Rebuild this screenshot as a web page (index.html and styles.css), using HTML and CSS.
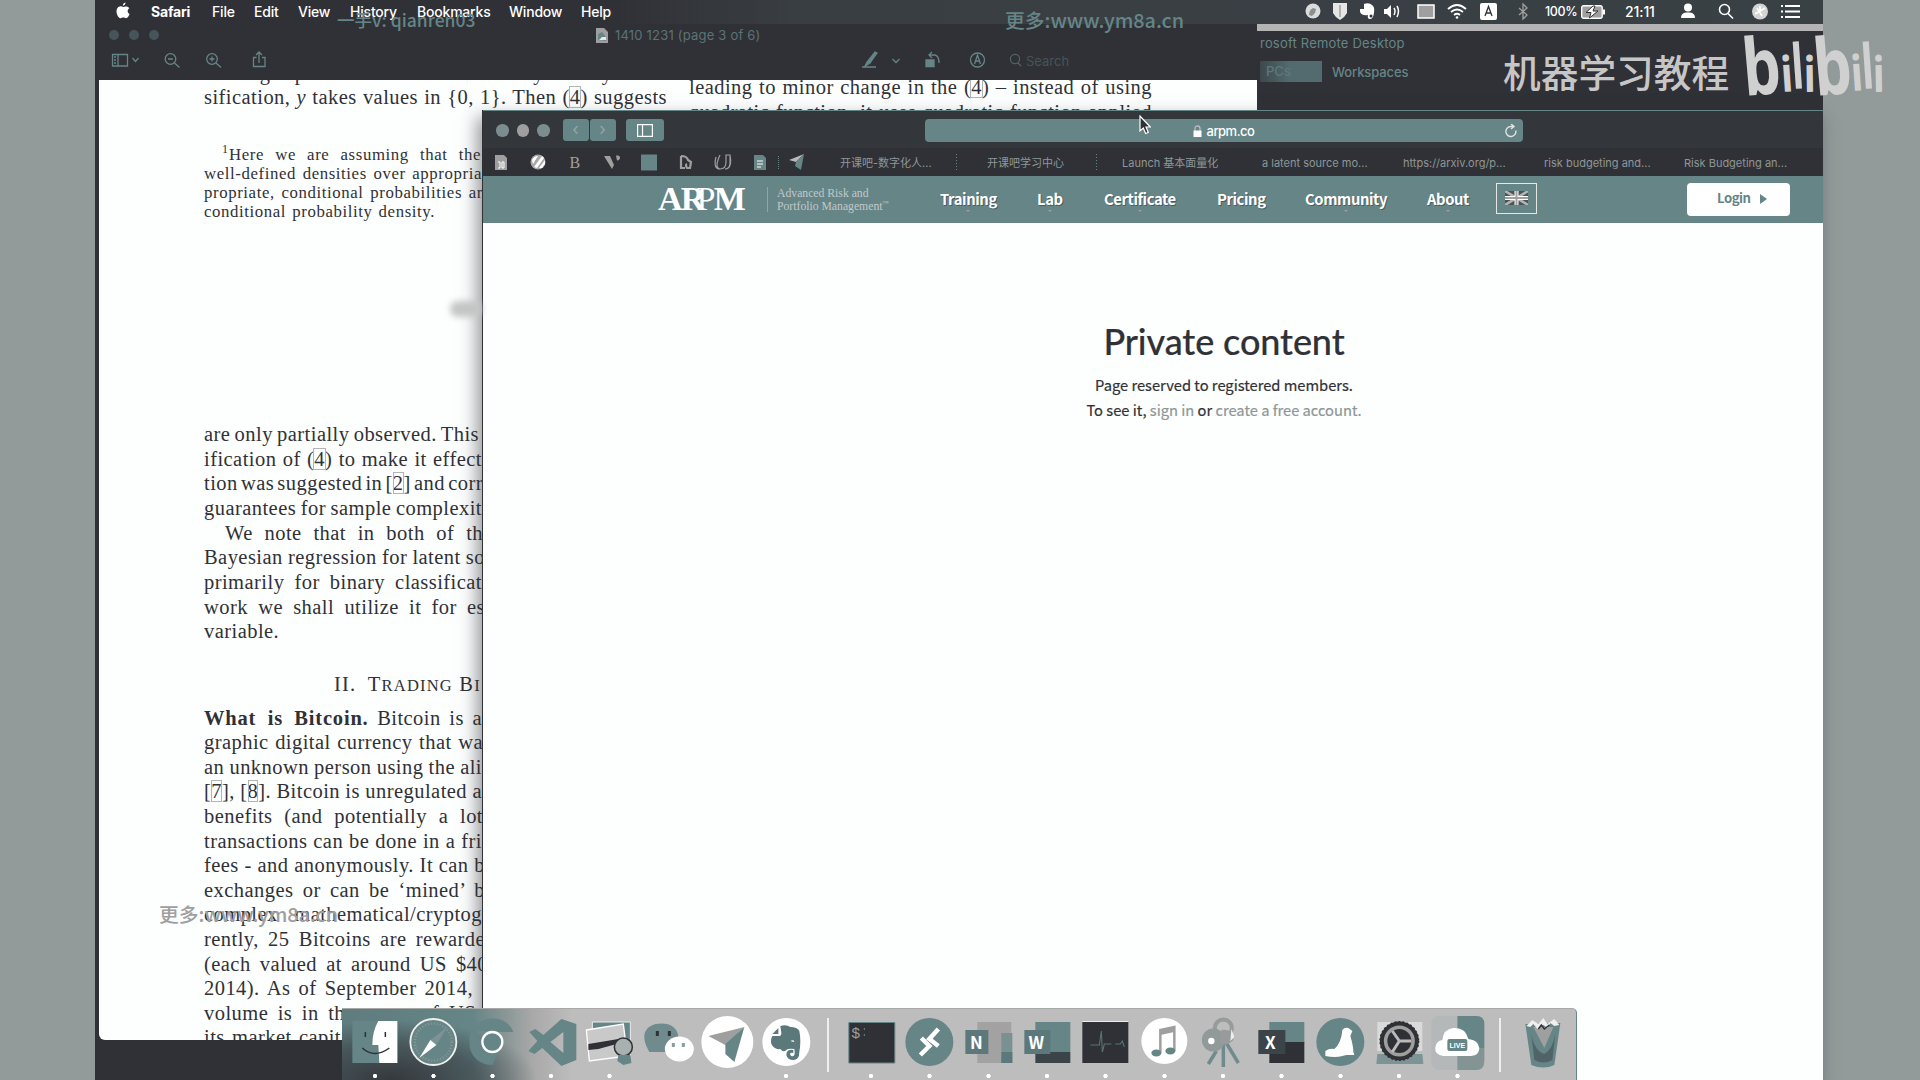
FILE: index.html
```html
<!DOCTYPE html>
<html lang="en">
<head>
<meta charset="utf-8">
<title>Private content</title>
<link rel="stylesheet" href="styles.css">
</head>
<body>
<div class="desktop">

  <section class="remote">
    <div class="remote-title">rosoft Remote Desktop</div>
    <div class="remote-tabs"><span class="tab-on">PCs</span><span class="tab">Workspaces</span></div>
  </section>

  <section class="preview">
    <header class="pv-title">
      <i class="pv-dot"></i><i class="pv-dot"></i><i class="pv-dot"></i>
      <svg class="pv-file" width="12" height="15" viewBox="0 0 12 15"><path d="M0 0h8l4 4v11H0z" fill="#9f9f9f"/><path d="M2 12V6l4-2 4 5v4z" fill="#658587"/><path d="M3 12h7V9H6z" fill="#e8e8e8"/></svg>
      <span class="pv-name">1410 1231 (page 3 of 6)</span>
    </header>
    <div class="pv-tools">
      <svg width="1157" height="36" viewBox="99 43 1157 36" fill="none" stroke="#658587" stroke-width="1.3">
        <path d="M112.500 54.500h15v11.500h-15zM118 54.500v11.500M114 57h2m-2 3h2m-2 3h2M132.500 58l3 3.500 3-3.500"/>
        <circle cx="170.500" cy="59" r="5.300"/><path d="M168 59h5M174.500 63l5 4.500"/>
        <circle cx="212" cy="59" r="5.300"/><path d="M209.500 59h5M212 56.500v5M216 63l5 4.500"/>
        <path d="M256.500 57.500h-3V66.500h11.500v-9h-3M259 63V52M256 55l3-3 3 3"/>
        <path d="M865 66l2-4 8-10 2 1-7 10zM862 67h14" fill="#658587"/><path d="M892.500 59l3.500 3.500 3.500-3.500"/>
        <path d="M926 60h8v6.500h-8z" fill="#658587"/><path d="M929 55h6q4 1 4 8M932 52l-3 3 3 3"/>
        <circle cx="977.500" cy="60" r="7"/><path d="M974.500 64l3-9 3 9M976 61h3"/>
        <circle cx="1015" cy="59" r="4.600" stroke="#506467"/><path d="M1018 63l3 3" stroke="#506467"/>
      </svg>
      <span class="pv-search">Search</span>
    </div>
    <div class="paper">
      <div class="col">
        <p class="w463">Making up models for the data by binary clas-</p>
        <p class="w463">sification, <em>y</em> takes values in {0, 1}. Then <span class="ref">(<b>4</b>)</span> suggests</p>
        <div class="foot">
          <p class="in w252"><sup>1</sup>Here we are assuming that the</p>
          <p class="w278">well-defined densities over appropria</p>
          <p class="w279">propriate, conditional probabilities ar</p>
          <p class="w231">conditional probability density.</p>
        </div>
        <div class="body">
          <p class="w275">are only partially observed. This</p>
          <p class="w278">ification of <span class="ref">(<b>4</b>)</span> to make it effect</p>
          <p class="w279">tion was suggested in [<b>2</b>] and corr</p>
          <p class="w278">guarantees for sample complexit</p>
          <p class="in w258">We note that in both of th</p>
          <p class="w281">Bayesian regression for latent so</p>
          <p class="w278">primarily for binary classificat</p>
          <p class="w281">work we shall utilize it for es</p>
          <p class="w72">variable.</p>
          <h2>II.&ensp;T<small>RADING</small> B<small>I</small></h2>
          <p class="w278"><strong>What is Bitcoin.</strong> Bitcoin is a</p>
          <p class="w279">graphic digital currency that wa</p>
          <p class="w278">an unknown person using the ali</p>
          <p class="w278">[<b>7</b>], [<b>8</b>]. Bitcoin is unregulated a</p>
          <p class="w279">benefits (and potentially a lot</p>
          <p class="w278">transactions can be done in a fri</p>
          <p class="w281">fees - and anonymously. It can b</p>
          <p class="w281">exchanges or can be ‘mined’ b</p>
          <p class="w278">complex mathematical/cryptog</p>
          <p class="w281">rently, 25 Bitcoins are rewarde</p>
          <p class="w284">(each valued at around US $40</p>
          <p class="w269">2014). As of September 2014,</p>
          <p class="w272">volume is in the range of US</p>
          <p class="w137">its market capit</p>
        </div>
      </div>
      <div class="col second">
        <p class="w463">leading to minor change in the <span class="ref">(<b>4</b>)</span> – instead of using</p>
        <p class="w463">quadratic function, it uses quadratic function applied</p>
      </div>
    </div>
  </section>

  <header class="menubar">
    <svg class="apple" width="14" height="17" viewBox="0 0 14 17"><path d="M9.500.5C7.800.800 6.800 2 6.900 3.700 8.600 3.600 9.700 2 9.500.5zM7.200 5C6 4.400 5 4.200 3.700 4.500 1.600 5 .4 6.900.5 9.400c.1 3 2 6.600 3.900 6.800 1 .1 1.700-.6 2.900-.6s1.800.6 2.800.6c1.500 0 2.900-2.500 3.500-4.100-2.500-1.200-2.500-4.600-.2-5.800C12.500 5 11 4.300 9.500 4.500 8.600 4.600 7.900 5 7.200 5z" fill="#fff"/></svg>
    <nav class="menus"><b>Safari</b><span>File</span><span>Edit</span><span>View</span><span>History</span><span>Bookmarks</span><span>Window</span><span>Help</span></nav>
    <div class="status">
      <svg width="232" height="27" viewBox="1300 0 232 27" fill="none" stroke="#fff" stroke-width="1.500">
        <circle cx="1313" cy="11" r="7.500" fill="#dcdcdc" stroke="none"/><path d="M1309 15q0-5 4-7l3 1-1 4-3 3z" fill="#8a8f90" stroke="none"/>
        <path d="M1333 3h14v10q-2 4-7 7-5-3-7-7z" fill="#e6e6e6" stroke="none"/><path d="M1340 5v12" stroke="#9f9f9f"/>
        <path d="M1364 4q5-2 8 1 3 2 2 8-1 6-4 6-3 0-2-4-6 1-8-3v-3h4z" fill="#fff" stroke="none"/><circle cx="1371" cy="16" r="1.500" fill="#303136" stroke="none"/>
        <path d="M1384 9h3l4-4v13l-4-4h-3z" fill="#fff" stroke="none"/><path d="M1394 8q2 3 0 7M1397 6q3 5 0 11"/>
        <path d="M1418 5h16v13h-16z" fill="#9f9f9f"/>
        <path d="M1448 9q9-8 18 0M1451 12q6-5 12 0M1454 15q3-2.500 6 0" stroke-width="1.800"/><circle cx="1457" cy="17.500" r="1.300" fill="#fff" stroke="none"/>
        <rect x="1480" y="3" width="17" height="17" rx="2" fill="#fff" stroke="none"/><path d="M1485 16l3.500-9.500 3.500 9.500M1486.300 13h4.500" stroke="#303136" stroke-width="1.300"/>
        <path d="M1519 8l8 7-4 4V4l4 4-8 7" stroke="#9f9f9f" stroke-width="1.300"/>
      </svg>
      <span class="pct">100%</span>
      <svg class="batt" width="25" height="14" viewBox="0 0 25 14"><rect x=".7" y=".7" width="20.500" height="12.600" rx="2" fill="#9f9f9f" stroke="#fff" stroke-width="1.400"/><path d="M23 4.500v5" stroke="#fff" stroke-width="2"/><path d="M12 1L5 7.500h5L8.500 13 17 6h-5l2-5z" fill="#fff" stroke="#303136"/></svg>
      <span class="clock">21:11</span>
      <svg class="right-ico" width="124" height="27" viewBox="1678 0 124 27" fill="none" stroke="#fff" stroke-width="1.600">
        <circle cx="1688" cy="7.500" r="4" fill="#fff" stroke="none"/><path d="M1681 18q0-5 5-5.500h4q5 .5 5 5.500z" fill="#fff" stroke="none"/>
        <circle cx="1724.500" cy="9.500" r="5"/><path d="M1728 13.500l5 5"/>
        <circle cx="1760" cy="11.500" r="8" fill="#d4d4d4" stroke="none"/><path d="M1755 14l10-6M1757 8l5 8M1760 6v5" stroke="#fff"/>
        <path d="M1785 6h15M1785 11.500h15M1785 17h15" stroke-width="2"/><path d="M1781 6h2M1781 11.500h2M1781 17h2" stroke-width="2"/>
      </svg>
    </div>
  </header>

  <section class="safari">
    <div class="sf-bar">
      <div class="sf-dots"><i></i><i></i><i></i></div>
      <div class="sf-nav"><span>‹</span><span>›</span></div>
      <div class="sf-side"><svg width="16" height="13" viewBox="0 0 16 13" fill="none" stroke="#fff" stroke-width="1.200"><path d="M.6.6h14.800v11.800H.6zM5.500.6v11.800"/></svg></div>
      <div class="sf-url">
        <svg width="9" height="12" viewBox="0 0 9 12"><path d="M2 6V3.500q0-2.500 2.500-2.500T7 3.500V6" fill="none" stroke="#bbb" stroke-width="1.300"/><path d="M.5 5.500h8V12h-8z" fill="#fff"/></svg>
        <span>arpm.co</span>
        <svg class="reload" width="12" height="14" viewBox="0 0 12 14" fill="none" stroke="#e4e4e4" stroke-width="1.400"><path d="M10.800 6.500A5 5 0 1 1 6 2.500h2M6 0l3 2.500L6 5"/></svg>
      </div>
    </div>
    <div class="sf-favs">
      <svg width="312" height="24" viewBox="492 150 312 24">
        <path d="M495 155h9l3 3v12h-12z" fill="#9f9f9f"/><path d="M498 162h2v6h-2m4-6h2v6h-2v-6" stroke="#fff" fill="none"/>
        <circle cx="538" cy="162" r="7.500" fill="#a8a8a8"/><path d="M532 160q2-4 6-4l-5 8zM534 167l8-11 2 2-7 10zM539 168l6-8v4l-3 4z" fill="#fff"/>
        <text x="569.500" y="168" class="fav-b">B</text>
        <path d="M604 156h6l4 9-2 4zM616 155.500q4-.5 4 2t-3 3z" fill="#9f9f9f"/>
        <path d="M641 154.500h16v16h-16z" fill="#658587"/>
        <path d="M681 156v12h4M681 156q6 0 7 4l3 2-1 6h-3q-2-3 0-4" fill="none" stroke="#9f9f9f" stroke-width="2.200"/>
        <path d="M720 155q-6 13 0 14 6 0 6-7v-7h4v8q0 6-5 6M716 157q-3 12 4 12M730 155q2 10-2 13" fill="none" stroke="#9f9f9f" stroke-width="1.200"/>
        <path d="M754 155h9l3 3v12h-12z" fill="#658587"/><path d="M757 161h6m-6 3h6m-6 3h4" stroke="#fff"/>
        <path d="M778.500 156v14" stroke="#658587" stroke-dasharray="1 1"/>
        <path d="M789 160l15-6-8 8z" fill="#b8b8b8"/><path d="M804 154l-3 16-6-4 1-4z" fill="#658587"/>
      </svg>
      <div class="links"><span>开课吧-数字化人...</span><span>开课吧学习中心</span><span>Launch 基本面量化</span><span>a latent source mo...</span><span>https://arxiv.org/p...</span><span>risk budgeting and...</span><span>Risk Budgeting an...</span></div>
    </div>
    <div class="site-head">
      <div class="logo"><span class="lt">AR<i>P</i>M</span><span class="tag">Advanced Risk and<br>Portfolio Management<sup>™</sup></span></div>
      <nav class="site-nav"><a>Training</a><a>Lab</a><a>Certificate</a><a class="plain">Pricing</a><a>Community</a><a>About</a></nav>
      <div class="flag"><svg width="23" height="14" viewBox="0 0 23 14"><path d="M0 0h23v14H0z" fill="#4b5558"/><path d="M0 0l23 14M23 0L0 14" stroke="#b5b5b5" stroke-width="2.500"/><path d="M11.500 0v14M0 7h23" stroke="#fff" stroke-width="4"/><path d="M11.500 0v14M0 7h23" stroke="#9f9f9f" stroke-width="2"/></svg></div>
      <a class="login">Login <i></i></a>
    </div>
    <main class="content">
      <h1>Private content</h1>
      <p>Page reserved to registered members.</p>
      <p>To see it, <a>sign in</a> or <a>create a free account.</a></p>
    </main>
  </section>

  <div class="smudge"></div>

  <footer class="dock">
    <svg class="app run" viewBox="-29 0 58 72"><path d="M-23 13H22v42h-45z" fill="#658587"/><path d="M3 13h19v42H4l-1-18h-6q0-14 6-24z" fill="#fff"/><path d="M-10 24v5M10 24v5M-13 40q12 11 27 0" fill="none" stroke="#303136" stroke-width="1.500"/></svg>
    <svg class="app run" viewBox="-29 0 58 72"><circle cy="34" r="23" fill="#658587" stroke="#f0f0f0" stroke-width="1.800"/><circle cy="34" r="18.500" fill="none" stroke="#8b9797" stroke-width="2.500" stroke-dasharray="1 2"/><path d="M14 19L3 37-3 32z" fill="#7f9293"/><path d="M-14 50L-3 32 3 37z" fill="#fff"/></svg>
    <svg class="app run" viewBox="-29 0 58 72"><path d="M-21 22Q-9 7 6 11q11 3 15 13H1z" fill="#658587"/><path d="M-21 22q-6 20 6 30 6 5 15 5l8-16-15-3z" fill="#658587"/><circle cy="34" r="10" fill="#658587" stroke="#fff" stroke-width="2.300"/></svg>
    <svg class="app run" viewBox="-29 0 58 72"><path d="M10 11l15 5v36l-15 6L-9 40l-8 6-6-3 9-10-8-9 6-3 8 6zM12 24L-1 34l13 11z" fill="#658587" fill-rule="evenodd"/></svg>
    <svg class="app run" viewBox="-29 0 58 72"><path d="M-17 14h38v34h-38z" fill="#658587" stroke="#eee"/><path d="M-23 22l37-6 4 32-38 5z" fill="#c9c9c9" stroke="#fff" stroke-width="1.300"/><path d="M-21 36l30-5 2 4-22 6-10 1z" fill="#303136"/><circle cx="14" cy="39" r="9" fill="#a9b0b0" stroke="#303136" stroke-width="1.500"/><path d="M9 47h12l1 8-8 2-6-4z" fill="#658587"/></svg>
    <svg class="app" viewBox="-29 0 58 72"><path d="M-19 44l-3-6q-7-17 9-22 20-3 23 12l-8 16z" fill="#6f8b8d"/><path d="M-11 23v5m12-5v5" stroke="#303136" stroke-width="3"/><ellipse cx="11" cy="41" rx="14.500" ry="12.500" fill="#fff"/><path d="M5 35v4m10-4v4" stroke="#8b9b9c" stroke-width="3"/></svg>
    <svg class="app" viewBox="-29 0 58 72"><circle cy="34" r="26" fill="#fff"/><path d="M-19 28l36-9L-2 37z" fill="#9f9f9f"/><path d="M17 19L7 54l-9-8V36z" fill="#658587"/></svg>
    <svg class="app run" viewBox="-29 0 58 72"><circle cy="34" r="24" fill="#fff"/><path d="M-6 18q6-2 10 1 7 0 9 4 2 10 0 21 0 8-6 8-6 0-7-5 0-6 7-5v3q-4-1-3 2 1 2 3 1 2-1 1-7-6-1-8 1-3 3-6-1-6 1-9-5-1-5 1-8h7q2 0 2-3z" fill="#5b797b"/><path d="M-8 20v6h-6z" fill="#5b797b"/><path d="M4 33q4-2 4 1z" fill="#fff"/></svg>
    <i class="sep"></i>
    <svg class="app run" viewBox="-29 0 58 72"><path d="M-22.500 14.500h46v40.500h-46z" fill="#303136" stroke="#658587"/><text x="-20" y="30" class="dollar">$</text><path d="M-7 20v2m0 4v2" stroke="#658587"/></svg>
    <svg class="app run" viewBox="-29 0 58 72"><circle cy="34" r="24" fill="#658587"/><path d="M-8 30l8 8-9 9M9 21L0 31l9 7" fill="none" stroke="#fff" stroke-width="4.500"/></svg>
    <svg class="app run" viewBox="-29 0 58 72"><path d="M-11 14h34v41h-34z" fill="#a2a2a2"/><path d="M13 25h11v30H13z" fill="#7b9091"/><path d="M13 44h11v11H13z" fill="#5b797b"/><path d="M-23 22H0v24h-23z" fill="#5d787b"/><text x="-12" y="41" class="ltr">N</text></svg>
    <svg class="app run" viewBox="-29 0 58 72"><path d="M-12 14h35v30h-35z" fill="#658587"/><path d="M-12 44h35v11h-35z" fill="#3b4549"/><path d="M-23 22H3v24h-26z" fill="#5d787b"/><text x="-11" y="41" class="ltr">W</text></svg>
    <svg class="app run" viewBox="-29 0 58 72"><path d="M-23 14h46v41h-46z" fill="#303136"/><path d="M-23 13.500h46" stroke="#eee"/><path d="M-15 37h9l2-14 1 21 2-8h7m4 0h5l2-3 2 6" fill="none" stroke="#587275" stroke-width="1.100"/></svg>
    <svg class="app run" viewBox="-29 0 58 72"><circle cy="33" r="23" fill="#fff"/><path d="M-4 45V22l14-3v24" fill="none" stroke="#9f9f9f" stroke-width="2.500"/><path d="M-4 22l14-3v5l-14 3z" fill="#9f9f9f"/><ellipse cx="-8" cy="45" rx="5" ry="3.500" fill="#658587"/><ellipse cx="6" cy="43" rx="5" ry="3.500" fill="#658587"/></svg>
    <svg class="app run" viewBox="-29 0 58 72"><path d="M-7 43l-8 13M0 27v32" stroke="#6f8b8d" stroke-width="3.500"/><path d="M3 35l12 20" stroke="#6f8b8d" stroke-width="3.500"/><circle cx="0" cy="20" r="8.500" fill="none" stroke="#979b9b" stroke-width="4"/><circle cx="-10" cy="32" r="11.500" fill="#929999"/><circle cx="-12" cy="33" r="3.200" fill="#fff"/><path d="M-2 22q12-2 12 10-8 8-14 2z" fill="#979b9b"/><path d="M8 21l3 8-4 4z" fill="#eee"/></svg>
    <svg class="app run" viewBox="-29 0 58 72"><path d="M-12 14h35v21h-35z" fill="#658587"/><path d="M-12 34h35v21h-35z" fill="#303136"/><path d="M-23 22H4v24h-27z" fill="#3b4549"/><text x="-11" y="41" class="ltr">X</text></svg>
    <svg class="app run" viewBox="-29 0 58 72"><circle cy="34" r="24" fill="#658587"/><path d="M2 22q2-3 6-2l4 3-2 5q3 10 3 16l1 3h-8l-4 1q-7 2-17 0l0-5q4-3 9-2 7-6 8-19z" fill="#fff"/></svg>
    <svg class="app run" viewBox="-29 0 58 72"><path d="M-22 14h45v29h-45z" fill="#dadada"/><path d="M-22 46h45l1 10h-47z" fill="#7c9496"/><circle cy="33" r="17.500" fill="#9f9f9f" stroke="#303136" stroke-width="4"/><circle cy="33" r="19" fill="none" stroke="#303136" stroke-width="2" stroke-dasharray="2 2"/><circle cy="33" r="12" fill="#303136"/><path d="M0 33h12M0 33l-7-10M0 33l-7 11" stroke="#bbb" stroke-width="3"/></svg>
    <svg class="app run" viewBox="-29 0 58 72"><rect x="-26" y="8" width="53" height="54" rx="8" fill="#b4b8b8"/><path d="M0 8h19q8 0 8 8v24H0z" fill="#658587"/><path d="M0 40h27v13q0 9-8 9H0z" fill="#839495"/><path d="M-14 48q-9-1-8-9 1-6 7-7 1-11 11-12 12-1 15 11 10 1 11 9 0 7-8 8z" fill="#fff"/><rect x="-10" y="31" width="20" height="12" rx="2" fill="#658587"/><text y="40" class="live">LIVE</text></svg>
    <i class="sep"></i>
    <svg class="app" viewBox="-29 0 58 72"><path d="M-18 16l35-1-6 42q-11 5-23 0z" fill="#658587"/><path d="M-10 19h20L1 40z" fill="#9f9f9f"/><path d="M-17 18l6-6 6 4 5-6 4 6 7-5 5 6-5 1-4-3-3 5-4-3-6 4-4-5-3 3z" fill="#efefef"/><path d="M-5 21l3-4 3 4 5-4" stroke="#303136" fill="none" stroke-width="1.500"/><path d="M-12 26q3 17 13 20Q9 42 12 26L9 52q-9 5-18 0z" fill="#506467"/></svg>
  </footer>

  <div class="mark m1">一手v: qianren03</div>
  <div class="mark m2">更多:www.ym8a.cn</div>
  <div class="mark m3">更多:www.ym8a.cn</div>
  <div class="mark m4">机器学习教程</div>
  <svg class="bili" width="146" height="76" viewBox="0 0 146 76">
    <text transform="translate(6 67) rotate(-5)" font-size="79" textLength="38" lengthAdjust="spacingAndGlyphs">b</text>
    <text transform="translate(43 63) rotate(-4)" font-size="49" textLength="12" lengthAdjust="spacingAndGlyphs">i</text>
    <text transform="translate(54 60) rotate(-4)" font-size="62" textLength="12" lengthAdjust="spacingAndGlyphs">l</text>
    <text transform="translate(65 63) rotate(-1)" font-size="49" textLength="12" lengthAdjust="spacingAndGlyphs">i</text>
    <text transform="translate(77 67) rotate(-5)" font-size="79" textLength="38" lengthAdjust="spacingAndGlyphs">b</text>
    <text transform="translate(113 62) rotate(-4)" font-size="49" textLength="12" lengthAdjust="spacingAndGlyphs">i</text>
    <text transform="translate(124 60) rotate(-4)" font-size="62" textLength="12" lengthAdjust="spacingAndGlyphs">l</text>
    <text transform="translate(134 63) rotate(-1)" font-size="49" textLength="12" lengthAdjust="spacingAndGlyphs">i</text>
  </svg>
  <svg class="cursor" width="12" height="20" viewBox="0 0 12 20"><path d="M1 1v15l3.300-3 2.300 5.500 2.700-1-2.300-5.500h4.300z" fill="#303136" stroke="#fff" stroke-width="1.200"/></svg>
</div>
</body>
</html>
```
FILE: styles.css
```css
* { box-sizing: border-box; }
body { margin: 0; background: #929a9a; }
p, h1, h2 { margin: 0; font-weight: normal; }
.desktop {
  position: relative; width: 1920px; height: 1080px; overflow: hidden;
  background: linear-gradient(90deg, #929a9a 95px, #303136 95px, #303136 1823px, #929a9a 1823px);
  font-family: Inter, "Noto Sans CJK SC", sans-serif; color: #303136;
}

/* menu bar */
.menubar {
  position: absolute; left: 95px; top: 0; width: 1728px; height: 24px;
  display: flex; align-items: flex-start; padding-left: 21px; overflow: hidden;
  background: linear-gradient(90deg, #303136 520px, #393e43 700px, #394145);
  color: #fff; font-size: 14px; line-height: 23px; font-weight: 500;
}
.apple { margin-top: 2px; }
.menus { display: grid; margin-left: 21px; grid-template-columns: 61px 42px 44px 52px 67px 92px 72px 40px; letter-spacing: -.2px; }
.menus b { font-weight: 700; }
.status { display: flex; margin-left: auto; padding-right: 21px; }
.pct { margin-left: 13px; width: 36px; font-size: 12.500px; letter-spacing: -.4px; }
.batt { margin-top: 5px; }
.clock { margin-left: 19px; width: 53px; letter-spacing: -.1px; }

/* remote desktop window */
.remote {
  position: absolute; left: 1257px; top: 24px; width: 566px; height: 90px;
  border-top: 7px solid #b4b4b4; background: #303136; color: #658587;
}
.remote-title { padding: 3px 0 0 3px; font-size: 13px; line-height: 18px; letter-spacing: .2px; }
.remote-tabs { display: flex; align-items: center; margin: 9px 0 0 3px; height: 21px; font-size: 13px; font-weight: 500; }
.tab-on { width: 62px; height: 21px; padding-left: 6px; line-height: 21px; background: linear-gradient(90deg, #3d484c, #536b6e 30px); color: #5d787b; }
.tab { margin-left: 10px; letter-spacing: -.1px; }

/* preview window */
.preview {
  position: absolute; left: 99px; top: 24px; width: 1158px; height: 1016px;
  background: #fdfefe; border-radius: 0 0 6px 6px; overflow: hidden;
}
.pv-title { display: flex; align-items: center; height: 22px; padding-left: 10px; background: #303136; color: #5a7476; font-size: 13px; letter-spacing: .2px; }
.pv-dot { width: 10px; height: 10px; margin-right: 10px; border-radius: 50%; background: #465559; }
.pv-file { margin-left: 427px; }
.pv-name { margin-left: 7px; }
.pv-tools { display: flex; height: 34px; background: #303136; align-items: flex-start; }
.pv-tools svg { flex: none; margin-top: -3px; }
.pv-search { margin: 7px 0 0 -230px; color: #465559; font-size: 13px; line-height: 16px; }
.paper {
  display: flex; height: 960px; padding-left: 105px; overflow: hidden;
  font: 20.5px/24.65px "Liberation Serif", serif; letter-spacing: .45px; word-spacing: -2.5px;
}
.col { width: 463px; margin-top: -19.200px; flex: none; }
.second { margin: -5px 0 0 22px; }
.col p { text-align: justify; text-align-last: justify; white-space: nowrap; height: 24.65px; }
.foot { margin: 34.600px 0 200.700px; font-size: 16.800px; line-height: 19.2px; letter-spacing: .6px; }
.col .foot p { height: 19.2px; }
.col .in { margin-left: 21px; }
.foot .in { position: relative; margin-left: 25px; }
sup { line-height: 0; }
.foot sup { position: absolute; left: -7px; top: 4px; font-size: 12px; }
.col b { font-weight: normal; outline: 1px solid #b0b4b4; outline-offset: -1px; }
.ref b { padding: 0 1px; margin: 0 -1px; }
.col strong { letter-spacing: .8px; word-spacing: 0; }
.col h2 { margin: 28.100px 0 7px 130px; font-size: 20.5px; line-height: 24.65px; white-space: nowrap; letter-spacing: 1.2px; word-spacing: 0; }
.col small { font-size: 16.500px; }
.body h2 ~ p { height: 24.600px; }
.w463 { width: 463px; } .w252 { width: 252px; } .w278 { width: 278px; } .w279 { width: 279px; }
.w231 { width: 231px; } .w275 { width: 275px; } .w258 { width: 258px; } .w281 { width: 281px; }
.w72 { width: 72px; } .w284 { width: 284px; } .w269 { width: 269px; } .w272 { width: 272px; } .w137 { width: 137px; }

/* browser window */
.safari {
  position: absolute; left: 483px; top: 110px; width: 1340px; height: 970px;
  background: #fdfefe; box-shadow: -1px 0 0 #303136, -5px 8px 16px 1px rgba(48,49,54,.5);
}
.sf-bar { display: flex; height: 38px; padding-top: 9px; border-top: 1px solid #658587; background: #33363b; }
.sf-dots { display: flex; gap: 8px; margin: 4px 0 0 13px; height: 13px; }
.sf-dots i { width: 12.500px; height: 12.500px; border-radius: 50%; background: #7b8d8e; }
.sf-dots i:nth-child(2) { background: #9f9f9f; }
.sf-nav { display: flex; gap: 1px; margin-left: 13px; margin-top: -1px; }
.sf-nav span { width: 26px; height: 22px; border-radius: 3px; background: #658587; color: #96a5a5; text-align: center; font-size: 17px; line-height: 20px; }
.sf-side { display: grid; place-items: center; width: 38px; height: 22px; margin: -1px 0 0 10px; border-radius: 3px; background: #658587; }
.sf-url {
  display: flex; align-items: center; width: 598px; height: 23px; margin: -1px 0 0 261px; padding: 0 6px 0 268px;
  border-radius: 4px; background: #658587; color: #fff; font-size: 13px; font-weight: 500; letter-spacing: -.5px;
}
.sf-url span { margin-left: 5px; }
.reload { margin-left: auto; }
.sf-favs { display: flex; height: 28px; padding: 2px 0 0 9px; background: #303136; }
.fav-b { font: 16px "Liberation Serif", serif; fill: #9f9f9f; }
.links {
  display: grid; grid-template-columns: 147px 135px 140px 141px 141px 140px 115px; margin-left: 36px;
  color: #8d9797; font-size: 11px; line-height: 26px; white-space: nowrap;
}
.links span:nth-child(-n+2) { background: repeating-linear-gradient(#658587 0 1px, transparent 1px 3px) right 30px top 4px / 1px 18px no-repeat; }
.links span:nth-child(2) { background-position: right 25px top 4px; }
.site-head { display: flex; align-items: center; height: 47px; background: #658587; color: #fff; }
.logo { display: flex; align-items: center; width: 440px; padding-left: 175px; }
.lt { width: 101px; font: bold 34px/40px "Liberation Serif", serif; letter-spacing: -1.8px; margin-top: -2px; }
.lt i { font-style: normal; font-weight: normal; margin-left: -7px; }
.tag { margin-left: 8px; padding-left: 9px; border-left: 1px solid #9f9f9f; color: #c2c8c8; font: 11.700px/13.500px "Liberation Serif", serif; height: 25px; margin-top: -1px; white-space: nowrap; }
.tag sup { font-size: 6px; }
.site-nav {
  display: grid; grid-template-columns: 97px 67px 113px 88px 122px 69px; margin: -2px 0 0 17px;
  font: 700 14.800px/24px "Noto Sans CJK SC", sans-serif; letter-spacing: -.4px;
}
.site-nav a { position: relative; justify-self: start; text-shadow: 1px 1px 0 #4b5c5f; }
.site-nav a:not(.plain)::after {
  content: ""; position: absolute; left: 50%; bottom: -3px; margin-left: -2px;
  border: 2px solid transparent; border-top-color: #9f9f9f;
}
.flag { display: grid; place-items: center; width: 41px; height: 31px; margin-top: -3px; border: 1px solid #e6e6e6; }
.login {
  display: flex; align-items: center; width: 103px; height: 33px; margin: 0 0 0 150px; padding: 0 0 3px 30px;
  border-radius: 4px; background: #fff; color: #658587; font: 700 13.200px/30px "Noto Sans CJK SC", sans-serif; letter-spacing: -.5px;
}
.login i { margin: 1px 0 0 9px; border: 5.500px solid transparent; border-left: 7px solid #658587; border-right: 0; }
.content { width: 800px; margin-left: 341px; padding-top: 93px; text-align: center; }
.content h1 { font: 500 36px/50px Lato, sans-serif; letter-spacing: -.1px; -webkit-text-stroke: .2px #303136; }
.content p { font: 14.700px/25px "Noto Sans CJK SC", sans-serif; -webkit-text-stroke: .2px currentColor; }
.content h1 + p { margin-top: 6px; }
.content a { color: #8e9797; }
.smudge { position: absolute; left: 450px; top: 301px; width: 32px; height: 16px; background: #c4c6c6; filter: blur(3px); border-radius: 8px; }

/* dock */
.dock {
  position: absolute; left: 342px; top: 1008px; width: 1235px; height: 72px; padding-left: 3.700px;
  display: flex; border-radius: 0 5px 0 0; border-top: 1px solid #a8a8a8; border-right: 1px solid #658587;
  background:
    radial-gradient(ellipse 145px 60px at 50px 100%, rgba(48,49,54,.9), rgba(48,49,54,.5) 60%, rgba(48,49,54,0)),
    linear-gradient(90deg, #5f7c7e, #658587 130px, #8b9797 165px, #a8a8a8 190px, #bdbdbd 230px, #bdbdbd);
}
.app { flex: none; width: 58.7px; height: 72px; margin-top: -1px; }
.run { background: radial-gradient(circle at 50% 68px, #fff 1.900px, transparent 2.400px); }
.sep { flex: none; width: 2px; height: 54px; margin: 9px 12.2px 0; background: #eee; }
.dollar { font: 15px "Liberation Mono", monospace; fill: #9f9f9f; }
.ltr { font: 700 17px "Noto Sans CJK SC", sans-serif; fill: #fff; text-anchor: middle; }
.live { font: 700 7px "Liberation Sans", sans-serif; fill: #fff; text-anchor: middle; }

/* overlaid marks */
.mark { position: absolute; white-space: nowrap; color: #658587; font-family: "Noto Sans CJK SC", sans-serif; line-height: 26px; }
.m1 { left: 337px; top: 7px; font-size: 17.500px; font-weight: 500; }
.m2 { left: 1005px; top: 7px; font-size: 19.800px; font-weight: 500; }
.m3 { left: 159px; top: 901px; font-size: 19.800px; font-weight: 500; color: #9f9f9f; }
.m4 { left: 1503px; top: 51px; font-size: 37.700px; line-height: 40px; font-weight: 500; color: #c6c6c6; }
.bili { position: absolute; left: 1739px; top: 29px; fill: #d0d0d0; font-family: "Noto Sans", sans-serif; font-weight: 700; }
.cursor { position: absolute; left: 1139px; top: 115px; }
```
